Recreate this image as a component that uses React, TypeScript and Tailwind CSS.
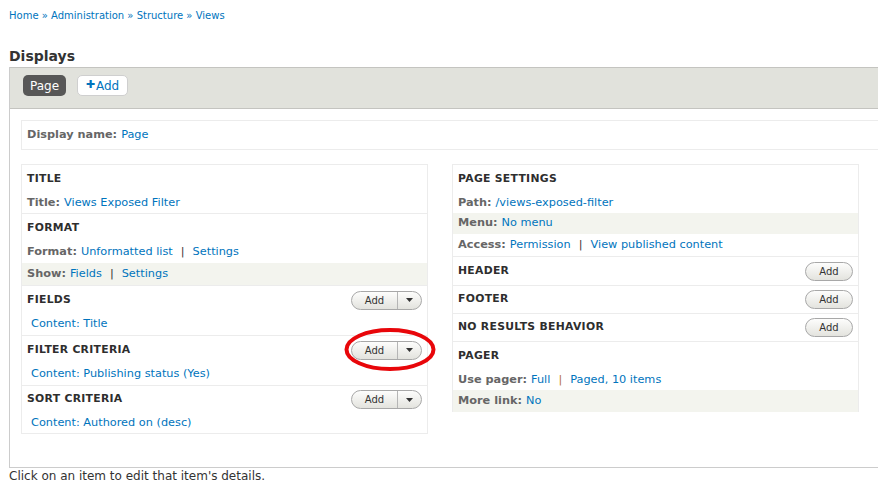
import React from "react";

const link = "text-[#0074bd]";

function SplitAdd() {
  return (
    <div className="flex h-[19px] w-[71px] items-stretch rounded-full border border-[#a8a8a8] bg-gradient-to-b from-[#fdfdfc] to-[#e3e3de] text-[10px] text-[#333]">
      <div className="flex flex-1 items-center justify-center border-r border-[#b5b5b5]">Add</div>
      <div className="flex w-[23px] items-center justify-center">
        <svg width="7" height="4" viewBox="0 0 7 4"><path d="M0 0h7L3.5 4z" fill="#333" /></svg>
      </div>
    </div>
  );
}

function SimpleAdd() {
  return (
    <div className="flex h-[19px] w-[48px] items-center justify-center rounded-full border border-[#a8a8a8] bg-gradient-to-b from-[#fdfdfc] to-[#e3e3de] text-[10px] text-[#333]">
      Add
    </div>
  );
}

function Header({ title, button, h = "h-[28px]" }: { title: string; button?: React.ReactNode; h?: string }) {
  return (
    <div className={`flex ${h} items-center justify-between pl-[5px] pr-[5px]`}>
      <span className="text-[10.8px] font-bold tracking-[0.3px] text-[#2e2e2e]">{title}</span>
      {button}
    </div>
  );
}

function Row({
  label,
  links,
  hl,
  indent,
  h = "h-[21px]",
  pipe = "text-[#333]",
}: {
  label?: string;
  links: string[];
  hl?: boolean;
  indent?: boolean;
  h?: string;
  pipe?: string;
}) {
  return (
    <div
      className={`flex ${h} items-center text-[11.3px] ${indent ? "pl-[9px]" : "pl-[5px]"} ${hl ? "bg-[#f3f4ee]" : ""}`}
    >
      {label && <span className="mr-[4px] font-bold text-[#666]">{label}</span>}
      {links.map((l, i) => (
        <React.Fragment key={i}>
          {i > 0 && <span className={`mx-[8px] ${pipe}`}>|</span>}
          <span className={link}>{l}</span>
        </React.Fragment>
      ))}
    </div>
  );
}

function Section({ children }: { children: React.ReactNode }) {
  return <div className="border-t border-[#ececec] first:border-t-0">{children}</div>;
}

export default function App() {
  return (
    <div
      className="relative h-[490px] w-[878px] overflow-hidden bg-white text-[#333]"
      style={{ fontFamily: '"DejaVu Sans", Verdana, sans-serif' }}
    >
      <div className={`pl-[9px] pt-[10px] text-[10px] leading-[12px] ${link}`}>
        Home » Administration » Structure » Views
      </div>
      <h2 className="mt-[25px] pl-[9px] text-[14px] font-bold leading-[18px] text-[#333]">Displays</h2>
      <div className="ml-[9px] mt-[2px] w-[900px] border-b border-l border-[#cccccc]">
        <div className="flex h-[42px] items-start gap-[11px] border-y border-[#c4c4c0] bg-[#e1e2dc] pl-[13px] pt-[7px]">
          <div className="flex h-[21px] w-[43px] items-center justify-center rounded-[5px] bg-[#575757] text-[12px] text-white">
            Page
          </div>
          <div className="flex h-[21px] w-[51px] items-center justify-center rounded-[5px] border border-[#cfcfcf] bg-white text-[12px] text-[#0074bd]">
            <span className="mr-[1px] text-[11px] font-bold">✚</span>Add
          </div>
        </div>
        <div className="pl-[11px] pt-[11px]">
          <div className="flex h-[30px] items-center border border-[#ececec] pl-[5px] text-[11.3px]">
            <span className="mr-[4px] font-bold text-[#666]">Display name:</span>
            <span className={link}>Page</span>
          </div>
          <div className="mt-[14px] flex gap-[24px]">
            <div className="w-[407px] self-start border border-[#ececec]">
              <Section>
                <Header title="TITLE" />
                <Row label="Title:" links={["Views Exposed Filter"]} h="h-[20px]" />
              </Section>
              <Section>
                <Header title="FORMAT" />
                <Row label="Format:" links={["Unformatted list", "Settings"]} />
                <Row label="Show:" links={["Fields", "Settings"]} hl h="h-[22px]" />
              </Section>
              <Section>
                <Header title="FIELDS" button={<SplitAdd />} />
                <Row links={["Content: Title"]} indent />
              </Section>
              <Section>
                <Header title="FILTER CRITERIA" button={<SplitAdd />} />
                <Row links={["Content: Publishing status (Yes)"]} indent />
              </Section>
              <Section>
                <Header title="SORT CRITERIA" button={<SplitAdd />} h="h-[27px]" />
                <Row links={["Content: Authored on (desc)"]} indent h="h-[20px]" />
              </Section>
            </div>
            <div className="w-[407px] self-start border-x border-t border-[#ececec]">
              <Section>
                <Header title="PAGE SETTINGS" />
                <Row label="Path:" links={["/views-exposed-filter"]} h="h-[20px]" />
                <Row label="Menu:" links={["No menu"]} hl />
                <Row label="Access:" links={["Permission", "View published content"]} h="h-[22px]" />
              </Section>
              <Section>
                <Header title="HEADER" button={<SimpleAdd />} />
              </Section>
              <Section>
                <Header title="FOOTER" button={<SimpleAdd />} h="h-[27px]" />
              </Section>
              <Section>
                <Header title="NO RESULTS BEHAVIOR" button={<SimpleAdd />} h="h-[27px]" />
              </Section>
              <Section>
                <Header title="PAGER" />
                <Row
                  label="Use pager:"
                  links={["Full", "Paged, 10 items"]}
                  h="h-[20px]"
                  pipe="text-[#b5703a]"
                />
                <Row label="More link:" links={["No"]} hl h="h-[22px]" />
              </Section>
            </div>
          </div>
          <div className="h-[33px]" />
        </div>
      </div>
      <div className="pl-[9px] text-[12px] leading-[16px] text-[#333]">
        Click on an item to edit that item's details.
      </div>
      <svg
        className="pointer-events-none absolute left-[344px] top-[328px]"
        width="92"
        height="43"
        viewBox="0 0 92 43"
      >
        <ellipse cx="46" cy="21.5" rx="43.5" ry="19.5" fill="none" stroke="#e8060a" strokeWidth="4" />
      </svg>
    </div>
  );
}
